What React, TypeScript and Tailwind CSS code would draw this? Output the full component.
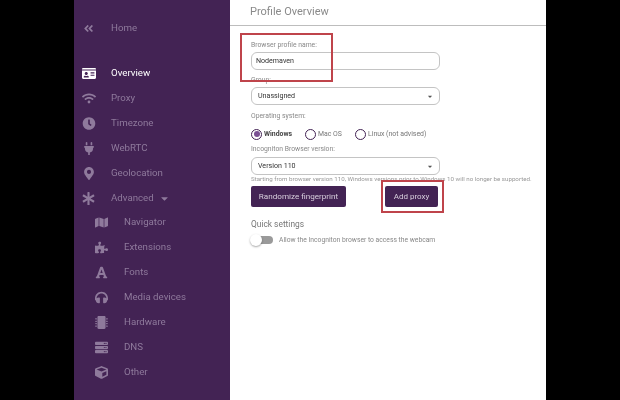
import {
  FaAngleDoubleLeft,
  FaAsterisk,
  FaCaretDown,
  FaClock,
  FaCube,
  FaFont,
  FaHeadphones,
  FaIdCard,
  FaMap,
  FaMapMarkerAlt,
  FaMicrochip,
  FaPlug,
  FaPuzzlePiece,
  FaServer,
  FaWifi,
} from 'react-icons/fa'

const mainItems = [
  { label: 'Overview', icon: FaIdCard, active: true },
  { label: 'Proxy', icon: FaWifi },
  { label: 'Timezone', icon: FaClock },
  { label: 'WebRTC', icon: FaPlug },
  { label: 'Geolocation', icon: FaMapMarkerAlt },
]

const subItems = [
  { label: 'Navigator', icon: FaMap },
  { label: 'Extensions', icon: FaPuzzlePiece },
  { label: 'Fonts', icon: FaFont },
  { label: 'Media devices', icon: FaHeadphones },
  { label: 'Hardware', icon: FaMicrochip },
  { label: 'DNS', icon: FaServer },
  { label: 'Other', icon: FaCube },
]

function Sidebar() {
  return (
    <aside className="w-[156px] shrink-0 bg-[#432354] text-[9.7px] text-[#8f7a9c]">
      <div className="flex h-[25px] mt-[16px] items-center pl-[9px]">
        <span className="flex w-[28px] justify-start">
          <FaAngleDoubleLeft className="h-[11px] w-[11px]" />
        </span>
        <span>Home</span>
      </div>

      <ul className="mt-[20px]">
        {mainItems.map((item) => (
          <li
            key={item.label}
            className={`flex h-[25px] items-center pl-[8px] ${item.active ? 'text-white' : ''}`}
          >
            <span className="flex w-[29px] justify-start">
              <item.icon className="h-[13px] w-[14px]" />
            </span>
            <span>{item.label}</span>
          </li>
        ))}
        <li className="flex h-[24px] items-center pl-[8px]">
          <span className="flex w-[29px] justify-start">
            <FaAsterisk className="h-[13px] w-[13px]" />
          </span>
          <span>Advanced</span>
          <FaCaretDown className="ml-[6px] h-[11px] w-[9px]" />
        </li>
        {subItems.map((item) => (
          <li key={item.label} className="flex h-[25px] items-center pl-[21px]">
            <span className="flex w-[29px] justify-start">
              <item.icon className="h-[13px] w-[13px]" />
            </span>
            <span>{item.label}</span>
          </li>
        ))}
      </ul>
    </aside>
  )
}

function Radio({ label, checked, width }: { label: string; checked?: boolean; width: string }) {
  return (
    <span className={`flex items-center gap-[2px] ${width} ${checked ? 'font-bold text-[#444]' : 'text-[#777]'}`}>
      <span className="flex h-[11px] w-[11px] shrink-0 items-center justify-center rounded-full border border-[#432354]">
        {checked && <span className="h-[6px] w-[6px] rounded-full bg-[#7a4f93]" />}
      </span>
      {label}
    </span>
  )
}

function SelectBox({ value }: { value: string }) {
  return (
    <div className="flex h-[18px] w-[189px] items-center justify-between rounded-[6px] border border-[#c4c4c4] pl-[6px] pr-[6px] text-[7.1px] text-[#333]">
      <span>{value}</span>
      <FaCaretDown className="h-[7px] w-[6px] text-[#555]" />
    </div>
  )
}

function ProfileForm() {
  return (
    <main className="relative w-[316px] shrink-0 bg-white">
      <div className="flex h-[26px] items-center border-b border-[#bdbdbd] pl-[20px] text-[11px] text-[#8a8a8a]">
        Profile Overview
      </div>

      <div className="pl-[21px]">
        <p className="mt-[14px] h-[10px] text-[6.8px] leading-[10px] text-[#888]">Browser profile name:</p>
        <div className="mt-[2px] flex h-[18px] w-[189px] items-center rounded-[6px] border border-[#c4c4c4] pl-[4px] text-[7.1px] text-[#333]">
          Nodemaven
        </div>

        <p className="mt-[5px] h-[10px] text-[6.8px] leading-[10px] text-[#888]">Group:</p>
        <div className="mt-[2px]">
          <SelectBox value="Unassigned" />
        </div>

        <p className="mt-[6px] h-[10px] text-[6.8px] leading-[10px] text-[#888]">Operating system:</p>
        <div className="mt-[7px] flex h-[12px] items-center text-[6.9px]">
          <Radio label="Windows" checked width="w-[54px]" />
          <Radio label="Mac OS" width="w-[50px]" />
          <Radio label="Linux (not advised)" width="w-[80px]" />
        </div>

        <p className="mt-[4px] h-[10px] text-[6.8px] leading-[10px] text-[#888]">Incogniton Browser version:</p>
        <div className="mt-[3px]">
          <SelectBox value="Version 110" />
        </div>

        <p className="h-[9px] text-[6.2px] leading-[9px] whitespace-nowrap text-[#999]">
          Starting from browser version 110, Windows versions prior to Windows 10 will no longer be supported.
        </p>

        <div className="mt-[2px] flex items-center">
          <button className="h-[21px] w-[95px] rounded-[2px] bg-[#432354] text-[8.1px] text-[#d8cfdd]">
            Randomize fingerprint
          </button>
          <button className="ml-[39px] h-[21px] w-[53px] rounded-[2px] bg-[#432354] text-[8px] text-[#d8cfdd]">
            Add proxy
          </button>
        </div>

        <p className="mt-[11px] text-[8.4px] leading-[12px] text-[#777]">Quick settings</p>
        <div className="mt-[5px] flex items-center">
          <span className="relative h-[8px] w-[22px] rounded-full bg-[#9a9a9a]">
            <span className="absolute left-[-1px] top-[-2px] h-[12px] w-[12px] rounded-full bg-white shadow-[0_1px_2px_rgba(0,0,0,0.35)]" />
          </span>
          <span className="ml-[6px] text-[6.75px] text-[#888]">
            Allow the Incogniton browser to access the webcam
          </span>
        </div>
      </div>

      {/* annotation boxes */}
      <div className="absolute left-[10px] top-[33px] h-[49px] w-[93px] border-2 border-[#bf444b]" />
      <div className="absolute left-[151px] top-[180px] h-[33px] w-[63px] border-2 border-[#bf444b]" />
    </main>
  )
}

export default function App() {
  return (
    <div className="h-[400px] w-[620px] overflow-hidden bg-black font-['Roboto',sans-serif] blur-[0.4px]">
      <div className="flex h-full pl-[74px]">
        <Sidebar />
        <ProfileForm />
      </div>
    </div>
  )
}
